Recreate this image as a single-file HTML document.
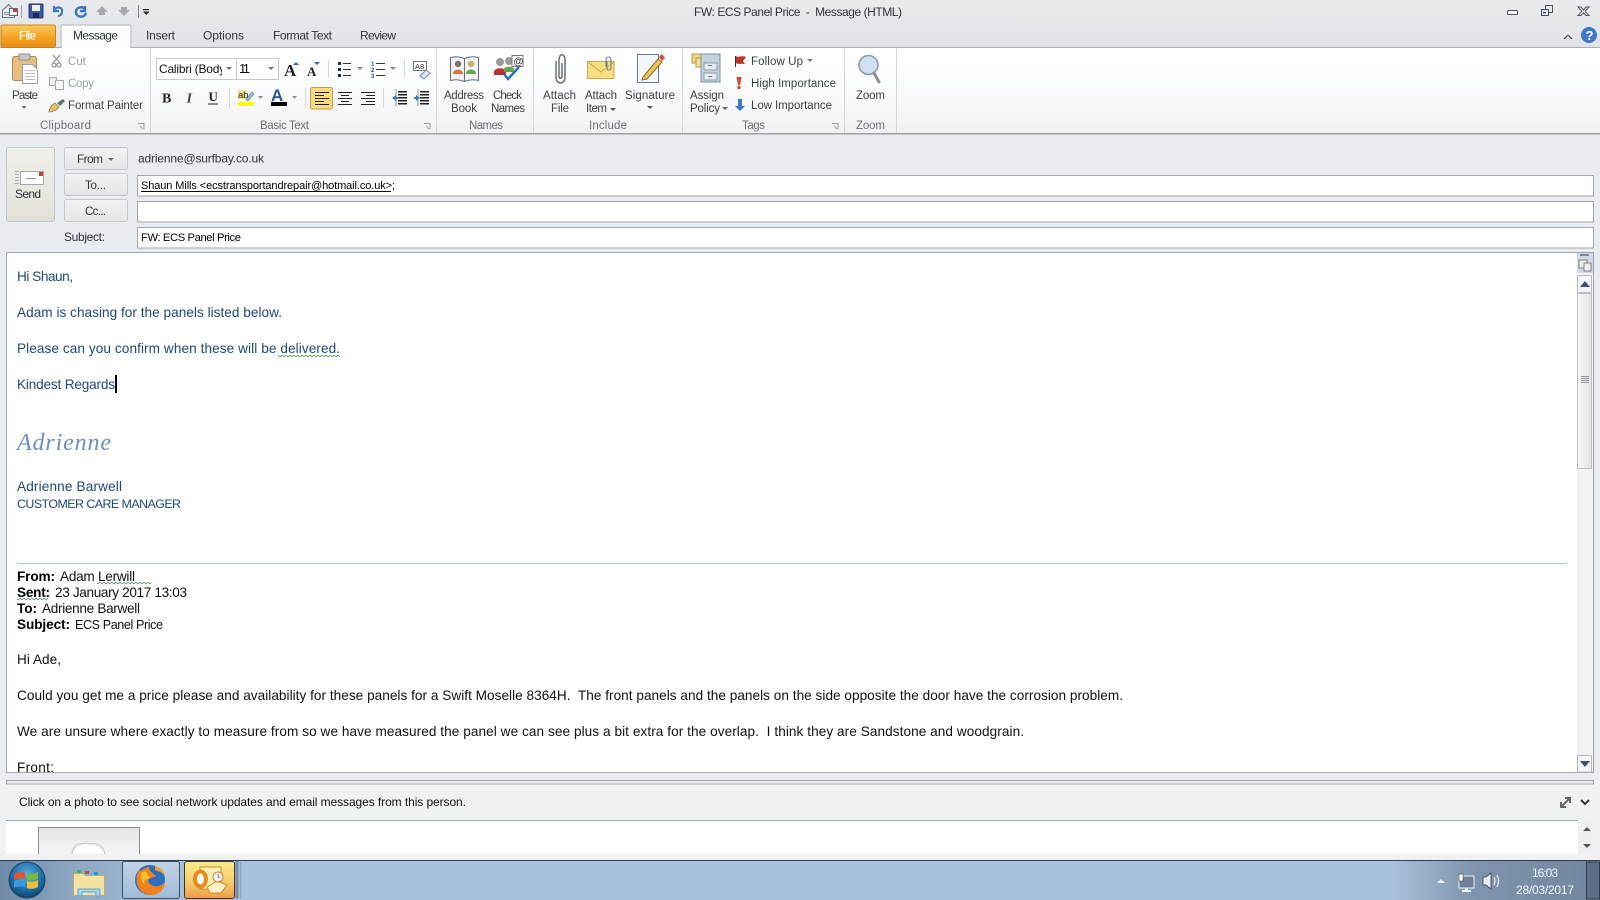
<!DOCTYPE html>
<html lang="en"><head><meta charset="utf-8"><title>FW: ECS Panel Price - Message (HTML)</title>
<style>
html,body{margin:0;padding:0;width:1600px;height:900px;overflow:hidden;background:#e9ecf1}
svg{display:block}
text{font-family:"Liberation Sans",sans-serif;white-space:pre}
.r{font-size:11.5px;fill:#3c3f45}
.g{font-size:11.5px;fill:#6c717a}
.d{font-size:11.5px;fill:#a0a2a6}
.b{font-size:13.6px;fill:#1f497d}
.k{font-size:13.6px;fill:#111}
.kb{font-size:13.6px;fill:#000;font-weight:bold}
.t{font-size:12px;fill:#30343a}
</style></head><body>
<svg xmlns="http://www.w3.org/2000/svg" width="1600" height="900" viewBox="0 0 1600 900" xml:space="preserve">
<defs>
<linearGradient id="tb" x1="0" y1="0" x2="0" y2="1"><stop offset="0" stop-color="#e9ebee"/><stop offset="1" stop-color="#dfe3e7"/></linearGradient>
<linearGradient id="rb" x1="0" y1="0" x2="0" y2="1"><stop offset="0" stop-color="#ffffff"/><stop offset=".6" stop-color="#f9fafb"/><stop offset="1" stop-color="#eff1f3"/></linearGradient>
<linearGradient id="fi" x1="0" y1="0" x2="0" y2="1"><stop offset="0" stop-color="#fbc964"/><stop offset=".5" stop-color="#f5a623"/><stop offset="1" stop-color="#ec8a12"/></linearGradient>
<linearGradient id="btn" x1="0" y1="0" x2="0" y2="1"><stop offset="0" stop-color="#f2f3f4"/><stop offset="1" stop-color="#e3e5e8"/></linearGradient>
<linearGradient id="send" x1="0" y1="0" x2="0" y2="1"><stop offset="0" stop-color="#f0f0ea"/><stop offset="1" stop-color="#e2e2da"/></linearGradient>
<linearGradient id="sb" x1="0" y1="0" x2="1" y2="0"><stop offset="0" stop-color="#f7f7f8"/><stop offset="1" stop-color="#e2e3e6"/></linearGradient>
<linearGradient id="task" x1="0" y1="0" x2="1" y2="0"><stop offset="0" stop-color="#6f8aa7"/><stop offset=".05" stop-color="#8fa9c5"/><stop offset=".12" stop-color="#a8c2de"/><stop offset=".87" stop-color="#a8c1dc"/><stop offset=".92" stop-color="#7f95ad"/><stop offset="1" stop-color="#71869e"/></linearGradient>
<linearGradient id="ol" x1="0" y1="0" x2="0" y2="1"><stop offset="0" stop-color="#fbeb8a"/><stop offset=".55" stop-color="#f6cd6c"/><stop offset="1" stop-color="#ee9c48"/></linearGradient>
<linearGradient id="ffb" x1="0" y1="0" x2="0" y2="1"><stop offset="0" stop-color="#c0d3e6"/><stop offset="1" stop-color="#a0bbd6"/></linearGradient>
<radialGradient id="orb" cx=".5" cy=".35" r=".7"><stop offset="0" stop-color="#5fb0e0"/><stop offset=".6" stop-color="#1c6ea8"/><stop offset="1" stop-color="#0c3a5e"/></radialGradient>
<linearGradient id="sh" x1="0" y1="0" x2="0" y2="1"><stop offset="0" stop-color="#e6e6e6"/><stop offset="1" stop-color="#f5f5f5"/></linearGradient>
<pattern id="wv" width="4" height="2" patternUnits="userSpaceOnUse"><rect x="0" y="0" width="1" height="1" fill="#4fae4f"/><rect x="1" y="1" width="2" height="1" fill="#4fae4f"/><rect x="3" y="0" width="1" height="1" fill="#4fae4f"/></pattern>
<clipPath id="fc"><rect x="157" y="59" width="65" height="20"/></clipPath>
</defs>

<!-- backgrounds -->
<rect width="1600" height="900" fill="#e9ecf1"/>
<rect width="1600" height="48" fill="url(#tb)"/>
<rect y="47" width="1600" height="1" fill="#a9adb3"/>
<rect y="48" width="1600" height="85" fill="url(#rb)"/>
<rect y="133" width="1600" height="1.5" fill="#9da1a8"/>

<!-- QAT -->
<g>
<path d="M2.500 10.500l6-6 6 6v7h-12z" fill="#e6ecf3" stroke="#6b7785"/><g fill="#8b97a6"><rect x="4" y="12" width="5" height="1"/><rect x="4" y="14" width="5" height="1"/></g><rect x="9.500" y="8.500" width="8" height="7" fill="#fff" stroke="#5c6a7a"/><rect x="13" y="9" width="4" height="3" fill="#d33"/>
<rect x="21" y="5" width="1" height="13" fill="#9aa0a8"/>
<rect x="29" y="4" width="14" height="14" rx="1" fill="#3c55a5" stroke="#28376f"/><rect x="32" y="5" width="8" height="6" fill="#eef2fa"/><rect x="33" y="13" width="6" height="5" fill="#1c2a58"/>
<path d="M54 6v5h5M54 10c3-4 9-3 8 2 0 2-2 4-4 4" fill="none" stroke="#3b76c4" stroke-width="2.2"/>
<path d="M85 6v5h-5M85 9c-3-3-9-2-9 3 0 6 9 6 10 1" fill="none" stroke="#3b76c4" stroke-width="2.4"/>
<path d="M96 12l6-6 6 6h-3v3h-6v-3z" fill="#a6aab0"/>
<path d="M118 10h3V7h6v3h3l-6 6z" fill="#a6aab0"/>
<rect x="138" y="5" width="1" height="13" fill="#7f858d"/>
<rect x="143" y="9" width="6" height="1.2" fill="#222"/><path d="M143 11.500h6.500l-3.200 3.500z" fill="#222"/>
</g>
<text class="t" x="694" y="16" textLength="208">FW: ECS Panel Price  -  Message (HTML)</text>
<!-- window controls -->
<rect x="1507.500" y="10.500" width="10" height="4" rx="1" fill="#fff" stroke="#4b5360"/>
<rect x="1545.500" y="5.500" width="7" height="7" fill="none" stroke="#4b5360"/><rect x="1541.500" y="9.500" width="7" height="6" fill="#e6e9ed" stroke="#4b5360"/><rect x="1543" y="12" width="3" height="1.400" fill="#4b5360"/>
<path d="M1578 7h3l2.500 3 2.500-3h3l-4 4.300 4 4.200h-3l-2.500-2.700-2.500 2.700h-3l4-4.200z" fill="#fff" stroke="#4b5360"/>
<path d="M1564 39l4-4 4 4" fill="none" stroke="#fff" stroke-width="3.500"/><path d="M1564 39l4-4 4 4" fill="none" stroke="#454b55" stroke-width="1.300"/>
<circle cx="1589" cy="35" r="8" fill="#3f78c8"/><text x="1585.500" y="40" style="font-size:13px;font-weight:bold;fill:#fff">?</text>

<!-- tabs -->
<rect x="1" y="25" width="54.500" height="22.500" rx="2" fill="url(#fi)" stroke="#c8811f"/>
<text x="19" y="39.500" textLength="17" style="font-size:12px;fill:#fff;stroke:#fff;stroke-width:.2">File</text>
<path d="M61 47.500V27q0-2 2-2h66q2 0 2 2v20.500" fill="#fcfcfd" stroke="#b4b8be"/><rect x="62" y="46" width="68" height="3" fill="#fff"/>
<text class="t" x="73" y="39.500" textLength="45">Message</text>
<text class="t" x="146" y="39.500" textLength="29">Insert</text>
<text class="t" x="203" y="39.500" textLength="41">Options</text>
<text class="t" x="273" y="39.500" textLength="59">Format Text</text>
<text class="t" x="360" y="39.500" textLength="36">Review</text>

<!-- group separators -->
<g fill="#d3d6da"><rect x="150" y="48" width="1" height="85"/><rect x="436" y="48" width="1" height="85"/><rect x="533" y="48" width="1" height="85"/><rect x="682" y="48" width="1" height="85"/><rect x="844" y="48" width="1" height="85"/><rect x="896" y="48" width="1" height="85"/></g>
<text class="g" x="40" y="129" textLength="51">Clipboard</text>
<text class="g" x="260" y="129" textLength="49">Basic Text</text>
<text class="g" x="469" y="129" textLength="34">Names</text>
<text class="g" x="589" y="129" textLength="38">Include</text>
<text class="g" x="742" y="129" textLength="23">Tags</text>
<text class="g" x="856" y="129" textLength="29">Zoom</text>
<g fill="none" stroke="#9ea2a8"><path d="M138 123.500h6v6"/><path d="M140 126l3 3"/><path d="M424 123.500h6v6"/><path d="M426 126l3 3"/><path d="M832 123.500h6v6"/><path d="M834 126l3 3"/></g>

<!-- clipboard -->
<rect x="12.500" y="56.500" width="24" height="24" rx="2" fill="#e9bd7e" stroke="#ad8b58"/><rect x="19" y="54" width="11" height="6" rx="1" fill="#c7c9cc" stroke="#8a8d92"/>
<path d="M22.500 64.500h10l5 5v14h-15z" fill="#fff" stroke="#9da4ad"/><g fill="#b8c0c9"><rect x="25" y="70" width="10" height="1"/><rect x="25" y="73" width="10" height="1"/><rect x="25" y="76" width="10" height="1"/><rect x="25" y="79" width="10" height="1"/></g>
<text class="r" x="12" y="99" textLength="26">Paste</text><path d="M21.500 106h5l-2.500 3z" fill="#6b6f76"/>
<g fill="none" stroke="#a4a6a9" stroke-width="1.500"><path d="M53 55l7 8M60 55l-7 8"/><circle cx="54" cy="65" r="2"/><circle cx="59" cy="65" r="2"/></g>
<text class="d" x="68" y="65" textLength="18">Cut</text>
<path d="M49.500 77.500h7v8h-7z" fill="#eee" stroke="#a6a8ab"/><path d="M55.500 80.500h8v9h-8z" fill="#f6f6f6" stroke="#a6a8ab"/>
<text class="d" x="68" y="87" textLength="26">Copy</text>
<path d="M49 112c0-4 3-7 6-9l4 4c-2 3-6 5-10 5z" fill="#e4c26b" stroke="#9b8240" stroke-width=".8"/><path d="M57 103l6-4 2 2-5 5z" fill="#5f6f86"/>
<text class="r" x="68" y="109" textLength="75">Format Painter</text>

<!-- font -->
<rect x="156.500" y="58.500" width="122" height="21" fill="#fff" stroke="#c6c9cd"/><rect x="236" y="59" width="1" height="20" fill="#c6c9cd"/>
<g clip-path="url(#fc)"><text class="t" x="159" y="73" textLength="70" style="fill:#111">Calibri (Body)</text></g><text class="t" x="239" y="73" textLength="11" style="fill:#111;font-size:13px">11</text>
<path d="M226 67h6l-3 3zM268 67h6l-3 3z" fill="#6e7278"/>
<text x="284" y="76" style="font-family:'Liberation Serif',serif;font-size:17px;font-weight:bold;fill:#222">A</text><path d="M293 65l3-3 3 3z" fill="#3465a4"/>
<text x="307" y="76" style="font-family:'Liberation Serif',serif;font-size:13px;font-weight:bold;fill:#222">A</text><path d="M314 62h6l-3 3z" fill="#3465a4"/>
<rect x="328" y="60" width="1" height="18" fill="#d4d6d9"/><rect x="404" y="60" width="1" height="18" fill="#d4d6d9"/>
<g fill="#1c2b49"><rect x="338" y="62" width="3" height="3"/><rect x="338" y="68" width="3" height="3"/><rect x="338" y="74" width="3" height="3"/></g>
<g fill="#333"><rect x="343" y="63" width="8" height="1"/><rect x="343" y="69" width="8" height="1"/><rect x="343" y="75" width="8" height="1"/></g>
<path d="M357 67h6l-3 3zM390 67h6l-3 3z" fill="#8a8d92"/>
<text x="371" y="66" style="font-size:6px;font-weight:bold;fill:#2a56a0">1</text><text x="371" y="72" style="font-size:6px;font-weight:bold;fill:#2a56a0">2</text><text x="371" y="78" style="font-size:6px;font-weight:bold;fill:#2a56a0">3</text>
<g fill="#333"><rect x="376" y="63" width="9" height="1"/><rect x="376" y="69" width="9" height="1"/><rect x="376" y="75" width="9" height="1"/></g>
<rect x="413.500" y="61.500" width="13" height="9" fill="#fff" stroke="#6e7785"/><text x="415" y="69" style="font-size:7.500px;fill:#333">A8</text><path d="M420 76l6-6 4 3-6 6z" fill="#dfe6ef" stroke="#7b90ad"/>
<text x="162" y="102.500" style="font-family:'Liberation Serif',serif;font-size:14px;font-weight:bold;fill:#222">B</text>
<text x="186.500" y="102.500" style="font-family:'Liberation Serif',serif;font-size:14px;font-style:italic;font-weight:bold;fill:#444">I</text>
<text x="208.500" y="101" style="font-family:'Liberation Serif',serif;font-size:13px;font-weight:bold;fill:#222">U</text><rect x="208" y="103.500" width="10" height="1" fill="#222"/>
<rect x="229" y="88" width="1" height="20" fill="#d4d6d9"/><rect x="305" y="88" width="1" height="20" fill="#d4d6d9"/><rect x="383" y="88" width="1" height="20" fill="#d4d6d9"/>
<rect x="238" y="90" width="8" height="9" fill="#f0e68c"/><text x="238" y="98" style="font-size:9.500px;fill:#222">ab</text><path d="M246 100l6-8 2 2-6 7z" fill="#a9bedb" stroke="#6482ab" stroke-width=".7"/><rect x="238" y="102" width="16" height="4" fill="#ffff00"/>
<text x="271" y="101" textLength="16" style="font-size:17px;font-weight:bold;fill:#2a56a0">A</text><rect x="271" y="102" width="16" height="4" fill="#000"/>
<path d="M258 96h5l-2.500 3zM292 96h5l-2.500 3z" fill="#8a8d92"/>
<rect x="310.500" y="87.500" width="22" height="21.500" rx="2" fill="#fddc7e" stroke="#c29b4c"/>
<g fill="#222"><rect x="315" y="92" width="14" height="1"/><rect x="315" y="95" width="9" height="1"/><rect x="315" y="98" width="14" height="1"/><rect x="315" y="101" width="9" height="1"/><rect x="315" y="104" width="14" height="1"/>
<rect x="338" y="92" width="14" height="1"/><rect x="341" y="95" width="8" height="1"/><rect x="338" y="98" width="14" height="1"/><rect x="341" y="101" width="8" height="1"/><rect x="338" y="104" width="14" height="1"/>
<rect x="361" y="92" width="14" height="1"/><rect x="366" y="95" width="9" height="1"/><rect x="361" y="98" width="14" height="1"/><rect x="366" y="101" width="9" height="1"/><rect x="361" y="104" width="14" height="1"/>
<rect x="398" y="91" width="9" height="1.500"/><rect x="398" y="94" width="9" height="1.500"/><rect x="398" y="97" width="9" height="1.500"/><rect x="398" y="100" width="9" height="1.500"/><rect x="398" y="103" width="9" height="1.500"/>
<rect x="420" y="91" width="9" height="1.500"/><rect x="420" y="94" width="9" height="1.500"/><rect x="420" y="97" width="9" height="1.500"/><rect x="420" y="100" width="9" height="1.500"/><rect x="420" y="103" width="9" height="1.500"/></g>
<rect x="395.500" y="89" width="1" height="17" fill="#555" opacity=".6"/><rect x="417.500" y="89" width="1" height="17" fill="#555" opacity=".6"/>
<path d="M392 98l4-3v6z" fill="#3d76c4"/><rect x="395" y="97" width="3" height="2" fill="#3d76c4"/>
<path d="M420 98l-4-3v6z" fill="#3d76c4"/><rect x="414" y="97" width="3" height="2" fill="#3d76c4"/>

<!-- names -->
<path d="M450.500 57.500q7-2 14 1 7-3 14-1v23q-7-2-14 1-7-3-14-1z" fill="#f1f3f6" stroke="#5f6f85"/><rect x="464" y="58" width="1" height="23" fill="#5f6f85"/><circle cx="458" cy="64" r="3.200" fill="#7f7266"/><path d="M453 74c0-6 10-6 10 0z" fill="#d9773f"/><circle cx="471" cy="64" r="3.200" fill="#c9b25c"/><path d="M466 74c0-6 10-6 10 0z" fill="#64a74f"/>
<text class="r" x="444" y="99" textLength="40">Address</text><text class="r" x="451" y="112" textLength="26">Book</text>
<circle cx="500" cy="62" r="4" fill="#9a9a9a"/><circle cx="509" cy="61" r="4" fill="#9a9a9a"/><path d="M494 72c0-5 12-5 12 0v3h-12z" fill="#b73236"/><path d="M504 69c0-3 10-3 10 0v3h-10z" fill="#62a746"/><rect x="512" y="55.500" width="11" height="11" fill="#fff" stroke="#777"/><text x="513.500" y="64.500" style="font-size:10px;font-weight:bold;fill:#444">@</text><path d="M504 74l4 5 11-12" fill="none" stroke="#2d6fc0" stroke-width="2.500"/>
<text class="r" x="493" y="99" textLength="29">Check</text><text class="r" x="491" y="112" textLength="34">Names</text>
<!-- include -->
<path d="M556 61v16c0 8 9 8 9 0V60c0-7-6-7-6 0v16c0 3 3 3 3 0V63" fill="none" stroke="#6d7176" stroke-width="1.500"/>
<text class="r" x="543" y="99" textLength="33">Attach</text><text class="r" x="551" y="112" textLength="18">File</text>
<rect x="587.500" y="61.500" width="26.500" height="17" fill="#f8de80" stroke="#c9a84f"/><path d="M588 62l13 10 13-10" fill="none" stroke="#c9a84f"/><path d="M607 61v7c0 3 4 3 4 0v-8c0-4-5-4-5 0v7" fill="none" stroke="#5f7899"/>
<text class="r" x="585" y="99" textLength="32">Attach</text><text class="r" x="586" y="112" textLength="21">Item</text><path d="M610 108h6l-3 3z" fill="#555"/>
<path d="M637.500 54.500h21v28h-21z" fill="#f4f7fb" stroke="#69788c"/><path d="M643 77l15-18 4 3-15 17-5 1z" fill="#f0c44f" stroke="#8a6d2c"/><path d="M659 57l3-3 3 4-3 3z" fill="#d44b4b"/>
<text class="r" x="625" y="99" textLength="50">Signature</text><path d="M647 106h6l-3 3z" fill="#555"/>
<!-- tags -->
<rect x="692" y="54" width="13" height="9" fill="#f0d67f" stroke="#b59c50"/><rect x="696" y="58" width="13" height="9" fill="#f5de8a" stroke="#b59c50"/>
<path d="M701 54h19v28h-19z" fill="#c4d2e0" stroke="#7f90a3"/><rect x="704" y="63" width="13" height="7" fill="#e4ebf2" stroke="#8b9bad"/><rect x="704" y="73" width="13" height="7" fill="#e4ebf2" stroke="#8b9bad"/><rect x="708" y="65" width="4" height="1" fill="#778"/><rect x="708" y="76" width="4" height="1" fill="#778"/>
<text class="r" x="690" y="99" textLength="34">Assign</text><text class="r" x="690" y="112" textLength="30">Policy</text><path d="M722 107h6l-3 3z" fill="#666"/>
<path d="M735 56c4 2 6-1 11 1l-3 4 2 3c-4-1-6 1-9-1l-1 3z" fill="#c4302b"/><rect x="735" y="56" width="1" height="11" fill="#333"/>
<text class="r" x="751" y="65" textLength="52">Follow Up</text><path d="M807 59h6l-3 3z" fill="#777"/>
<path d="M736.500 77h5l-1.500 8h-2z" fill="#e2412e"/><circle cx="739" cy="87.500" r="1.700" fill="#e2412e"/>
<text class="r" x="751" y="87" textLength="85">High Importance</text>
<path d="M738 99h4v7h3l-5 5-5-5h3z" fill="#3f78c8"/>
<text class="r" x="751" y="109" textLength="81">Low Importance</text>
<!-- zoom -->
<circle cx="868.500" cy="65" r="9.500" fill="#cfe0f2" stroke="#8a99ab" stroke-width="1.500"/><path d="M874 73l5 9" stroke="#8b8f94" stroke-width="3" stroke-linecap="round"/>
<text class="r" x="856" y="99" textLength="29">Zoom</text>

<!-- send + buttons -->
<rect x="6.500" y="147.500" width="48" height="74" rx="2" fill="url(#send)" stroke="#c4c6c8"/>
<rect x="20.500" y="171.500" width="23" height="13" fill="#fff" stroke="#a2aab4"/><rect x="26" y="178" width="10" height="1" fill="#8c97a5"/><rect x="39" y="172" width="4" height="4" fill="#d63a2e"/>
<g fill="#a0aebd"><rect x="15" y="171" width="4" height="1"/><rect x="15" y="174" width="4" height="1"/><rect x="15" y="177" width="4" height="1"/><rect x="15" y="180" width="4" height="1"/><rect x="15" y="183" width="4" height="1"/></g>
<text class="t" x="15" y="198" textLength="26">Send</text>
<g fill="url(#btn)" stroke="#c4c7cb"><rect x="64.500" y="147.500" width="63" height="22" rx="2"/><rect x="64.500" y="173.500" width="63" height="22" rx="2"/><rect x="64.500" y="199.500" width="63" height="22" rx="2"/></g>
<text class="t" x="77" y="163" textLength="26">From</text><path d="M108 158h6l-3 3z" fill="#6b6f76"/>
<text class="t" x="85" y="189" textLength="21" style="font-size:11.500px">To...</text>
<text class="t" x="85" y="215" textLength="21" style="font-size:11.500px">Cc...</text>
<text class="t" x="64" y="241" textLength="41">Subject:</text>
<text class="t" x="138" y="162.500" textLength="126">adrienne@surfbay.co.uk</text>
<g fill="#fff" stroke="#a3a7ad"><rect x="137.500" y="175.500" width="1456" height="20.500"/><rect x="137.500" y="201.500" width="1456" height="20.500"/><rect x="137.500" y="227.500" width="1456" height="20.500"/></g>
<text x="141" y="189" textLength="254" style="font-size:11px;fill:#000">Shaun Mills &lt;ecstransportandrepair@hotmail.co.uk&gt;;</text><rect x="141" y="191" width="250" height="1" fill="#000"/>
<text x="141" y="241" textLength="100" style="font-size:11.200px;fill:#000">FW: ECS Panel Price</text>

<!-- body -->
<rect x="6.500" y="252.500" width="1587" height="520" fill="#fff" stroke="#a3a7ad"/>
<text class="b" x="17" y="281" textLength="56">Hi Shaun,</text>
<text class="b" x="17" y="317" textLength="265">Adam is chasing for the panels listed below.</text>
<text class="b" x="17" y="353" textLength="323">Please can you confirm when these will be delivered.</text>
<rect x="278" y="355" width="62" height="2" fill="url(#wv)"/>
<text class="b" x="17" y="389" textLength="98">Kindest Regards</text>
<rect x="115" y="375" width="2" height="18" fill="#000"/>
<text x="17" y="450" textLength="94" style="font-family:'Liberation Serif',serif;font-style:italic;font-size:24px;fill:#6f8fbd">Adrienne</text>
<text class="b" x="17" y="491" textLength="105">Adrienne Barwell</text>
<text class="b" x="17" y="508" textLength="164" style="font-size:12.400px">CUSTOMER CARE MANAGER</text>
<rect x="17" y="563" width="1550" height="1" fill="#b5c4df"/>
<text class="kb" x="17" y="581" textLength="38">From:</text><text class="k" x="60" y="581" textLength="75">Adam Lerwill</text><rect x="97" y="582" width="54" height="2" fill="url(#wv)"/>
<text class="kb" x="17" y="597" textLength="33">Sent:</text><text class="k" x="55" y="597" textLength="132">23 January 2017 13:03</text><rect x="17" y="598" width="31" height="2" fill="url(#wv)"/>
<text class="kb" x="17" y="613" textLength="20">To:</text><text class="k" x="42" y="613" textLength="98">Adrienne Barwell</text>
<text class="kb" x="17" y="629" textLength="53">Subject:</text><text class="k" x="75" y="629" textLength="88" style="font-size:12.600px">ECS Panel Price</text>
<text class="k" x="17" y="664" textLength="44">Hi Ade,</text>
<text class="k" x="17" y="700" textLength="1106">Could you get me a price please and availability for these panels for a Swift Moselle 8364H.  The front panels and the panels on the side opposite the door have the corrosion problem.</text>
<text class="k" x="17" y="736" textLength="1007">We are unsure where exactly to measure from so we have measured the panel we can see plus a bit extra for the overlap.  I think they are Sandstone and woodgrain.</text>
<text class="k" x="17" y="772" textLength="37">Front:</text>
<rect x="7" y="772" width="1586" height="2" fill="#e9ecf1"/><rect x="6" y="772" width="1588" height="1" fill="#a3a7ad"/>

<!-- scrollbar -->
<rect x="1577" y="253" width="16" height="519" fill="#f2f2f3"/>
<rect x="1577" y="253" width="16" height="20" fill="#d0d8e4"/>
<rect x="1580" y="254" width="9" height="2" fill="#7e8794"/>
<rect x="1579" y="260" width="8" height="8" fill="#eee" stroke="#666" stroke-width=".8"/><rect x="1584" y="263" width="7" height="8" fill="#eee" stroke="#666" stroke-width=".8"/>
<rect x="1577.500" y="275.500" width="14" height="17" rx="1" fill="#f4f5f6" stroke="#b7bbc1"/><path d="M1580 287l5-6 5 6z" fill="#46506f"/>
<rect x="1577.500" y="293.500" width="14" height="175" fill="url(#sb)" stroke="#bcbfc4"/>
<g fill="#8d9095"><rect x="1581" y="376" width="8" height="1"/><rect x="1581" y="378" width="8" height="1"/><rect x="1581" y="380" width="8" height="1"/><rect x="1581" y="382" width="8" height="1"/></g>
<rect x="1577.500" y="755.500" width="14" height="16.500" rx="1" fill="#f4f5f6" stroke="#b7bbc1"/><path d="M1580 761h10l-5 6z" fill="#46506f"/>

<!-- people pane -->
<rect x="0" y="773" width="1600" height="87" fill="#e9ecf1"/>
<rect x="0" y="780" width="1600" height="80" fill="#f0f1f3"/>
<rect x="6.500" y="780.500" width="1587" height="3.500" fill="#e9ecf1" stroke="#a6aab0"/>
<text x="19" y="806" textLength="447" style="font-size:12px;fill:#111">Click on a photo to see social network updates and email messages from this person.</text>
<path d="M1561 807l9-9M1565 798h5v5M1561 802v5h5" fill="none" stroke="#666" stroke-width="2"/>
<path d="M1581 800l4 4 4-4" fill="none" stroke="#333" stroke-width="2"/>
<rect x="6" y="820" width="1572" height="34" fill="#fff"/><rect x="6" y="820" width="1572" height="1" fill="#a6aab0"/>
<rect x="1578" y="821" width="15" height="33" fill="#eeeff0"/>
<path d="M1583 831l4-4 4 4z" fill="#555"/><path d="M1583 844h8l-4 4z" fill="#555"/>
<rect x="38.500" y="827.500" width="101" height="28" fill="url(#sh)" stroke="#8a8e94"/>
<path d="M72 856c0-6 1-7 3-9 2-3 5-3 7-3 3-1 4-1 7 0 4-1 7 0 9 1 3 1 5 4 6 6 1 2 1 3 1 5z" fill="#fff" stroke="#bdbdbd"/>
<rect y="854" width="1600" height="6" fill="#f0f1f3"/>

<!-- taskbar -->
<rect y="860" width="1600" height="40" fill="url(#task)"/>
<rect y="860" width="1600" height="1" fill="#2f3e52"/>
<circle cx="27" cy="880" r="18" fill="url(#orb)" stroke="#1e4464"/>
<path d="M14 874q6-3 11-1v6q-5-2-11 1z" fill="#e8502e"/><path d="M27 873q5 2 11-1v7q-6 3-11 1z" fill="#7ab93f"/><path d="M14 881q6-3 11-1v7q-5-2-11 1z" fill="#3b9be0"/><path d="M27 881q5 2 11-1v7q-6 3-11 1z" fill="#f5c02c"/>
<path d="M73.500 873.500h10l2 2h19v20h-31z" fill="#f4e3a1" stroke="#c5ab68"/><rect x="77" y="870" width="4" height="3" fill="#3bb04a"/><rect x="85" y="871" width="4" height="3" fill="#d24a3c"/><rect x="94" y="872" width="4" height="3" fill="#2d8fd5"/>
<path d="M78 889h22v7h-4v-4H82v4h-4z" fill="#a3d6ee" stroke="#5ea6cc"/>
<rect x="122.500" y="861.500" width="57" height="37" rx="2.500" fill="url(#ffb)" stroke="#3d5066"/>
<circle cx="150" cy="880" r="15" fill="#2a6fc0"/><path d="M139 870c-5 8-3 24 12 25 8 0 14-6 14-13-3 3-6 5-10 4-4 0-7-3-7-6 2-3 6-2 8-4-4-4-7-5-7-9-5 1-7 3-8 4z" fill="#f0821e"/><path d="M141 873c2-1 4-2 5-2 0 3 3 5 4 7-3 1-6 2-6 6-2-2-4-6-3-11z" fill="#f8bf2a"/><path d="M155 866c5 1 9 5 10 10-2-3-6-5-10-6z" fill="#f6a21e"/>
<rect x="184.500" y="861.500" width="50" height="37" rx="2.500" fill="url(#ol)" stroke="#3e3528"/>
<rect x="236" y="861" width="2" height="37" fill="#8ea5bd" stroke="#3d5066" stroke-width=".5"/><rect x="240" y="862" width="1.500" height="36" fill="#8ea5bd"/>
<rect x="200" y="867" width="21" height="22" fill="#fdf1b5" stroke="#c98a2f"/>
<ellipse cx="200.500" cy="879" rx="5.500" ry="7.500" fill="#fff" stroke="#e8891c" stroke-width="4"/>
<path d="M207 887l10-6 10 4-6 8h-11z" fill="#fff3c9" stroke="#c98a2f"/><circle cx="218" cy="877" r="5" fill="#fff" stroke="#d6782a"/><path d="M218 874v3l2 1" fill="none" stroke="#b33" stroke-width=".9"/>
<!-- tray -->
<path d="M1437 883l4-4 4 4z" fill="#eaf1f7"/>
<rect x="1459" y="876" width="15" height="12" fill="#6d8198" stroke="#eef2f6"/><rect x="1462" y="890" width="9" height="2" fill="#eef2f6"/><rect x="1465" y="888" width="3" height="2" fill="#eef2f6"/><rect x="1459" y="874" width="4" height="7" fill="#fff" stroke="#444" stroke-width=".6"/>
<path d="M1483 877h3l5-4v16l-5-4h-3z" fill="#e6edf3" stroke="#556"/><path d="M1494 877q2 4 0 8M1497 875q3 6 0 12" fill="none" stroke="#eef2f6" stroke-width="1.200"/>
<text x="1532" y="877" textLength="26" style="font-size:12px;fill:#f2f6fa">16:03</text>
<text x="1516" y="894" textLength="58" style="font-size:12px;fill:#f2f6fa">28/03/2017</text>
<rect x="1586.500" y="862" width="13" height="37" fill="#5d6f84" stroke="#2f3e52"/>
</svg>
</body></html>
